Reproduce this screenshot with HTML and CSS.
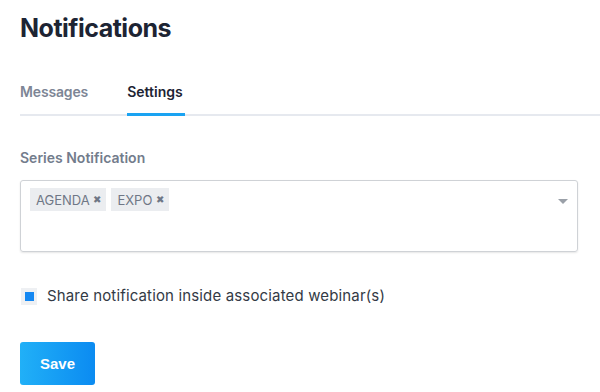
FILE: index.html
```html
<!DOCTYPE html>
<html>

<head>
    <meta charset="utf-8" />
    <meta name="viewport" content="width=device-width, initial-scale=1.0" />
    <title>Notifications</title>
    <link rel="stylesheet" href="styles.css">
</head>

<body>
    <div class="page">
        <h1 class="page-title">Notifications</h1>

        <div class="tabs">
            <div class="tab">Messages</div>
            <div class="tab tab-active">Settings</div>
        </div>

        <div class="field">
            <label class="field-label">Series Notification</label>
            <div class="multi-select">
                <div class="tags">
                    <span class="tag">AGENDA <span class="tag-remove">&#10006;</span></span>
                    <span class="tag">EXPO <span class="tag-remove">&#10006;</span></span>
                </div>
                <span class="caret"></span>
            </div>
        </div>

        <label class="check-row">
            <span class="checkbox"><span class="checkbox-mark"></span></span>
            Share notification inside associated webinar(s)
        </label>

        <button type="button" class="btn-save">Save</button>
    </div>
</body>

</html>
```

FILE: styles.css
```css
/* Общие стили */
body {
    margin: 0;
    font-family: 'Inter', 'Noto Sans', sans-serif;
    background-color: #ffffff;
    color: #333;
}

.page {
    padding: 11px 0 0 20px;
}

.page-title {
    margin: 0;
    font-size: 25px;
    font-weight: 700;
    line-height: 34px;
    color: #1d2433;
    letter-spacing: -0.5px;
}

/* Вкладки */
.tabs {
    display: flex;
    gap: 39px;
    margin-top: 38px;
    border-bottom: 2px solid #e6e9ef;
}

.tab {
    font-size: 14px;
    font-weight: 600;
    color: #7d8595;
    padding-bottom: 13px;
    margin-bottom: -2px;
    border-bottom: 3px solid transparent;
    line-height: 17px;
    letter-spacing: -0.15px;
}

.tab-active {
    color: #1d2433;
    border-bottom-color: #1aa3f2;
    padding-right: 2px;
    letter-spacing: 0;
}

/* Поле выбора */
.field {
    margin-top: 33px;
    margin-right: 22px;
}

.field-label {
    display: block;
    font-size: 14px;
    font-weight: 600;
    color: #737c8c;
    line-height: 17px;
    margin-bottom: 14px;
}

.multi-select {
    display: flex;
    justify-content: space-between;
    align-items: flex-start;
    height: 72px;
    border: 1px solid #cfd2d6;
    border-radius: 3px;
    box-shadow: 0 1px 2px rgba(0, 0, 0, 0.1);
    padding: 7px 9px 0 9px;
    box-sizing: border-box;
}

.tags {
    display: flex;
    gap: 5px;
}

.tag {
    background-color: #ebedf0;
    color: #6f7786;
    font-size: 13px;
    line-height: 22px;
    padding: 0 5px 0 6px;
}

.tag-remove {
    font-size: 10px;
    color: #6f7786;
    vertical-align: 2px;
}

.caret {
    margin-top: 11px;
    width: 0;
    height: 0;
    border-left: 5px solid transparent;
    border-right: 5px solid transparent;
    border-top: 5px solid #9aa0a8;
}

/* Чекбокс */
.check-row {
    display: flex;
    align-items: center;
    gap: 10px;
    margin-top: 35px;
    margin-left: 1px;
    font-size: 15px;
    color: #333a45;
    line-height: 18px;
    letter-spacing: 0.15px;
}

.checkbox {
    display: flex;
    align-items: center;
    justify-content: center;
    width: 16px;
    height: 17px;
    background-color: #eef0f3;
}

.checkbox-mark {
    width: 9px;
    height: 9px;
    background-color: #1588f2;
}

/* Кнопка */
.btn-save {
    display: block;
    margin-top: 37px;
    width: 75px;
    height: 43px;
    border: none;
    border-radius: 3px;
    background: linear-gradient(90deg, #21b0f7, #0b8bf1);
    color: #fff;
    font-family: 'Liberation Sans', Arial, sans-serif;
    font-size: 15px;
    font-weight: 700;
    cursor: pointer;
}
```
